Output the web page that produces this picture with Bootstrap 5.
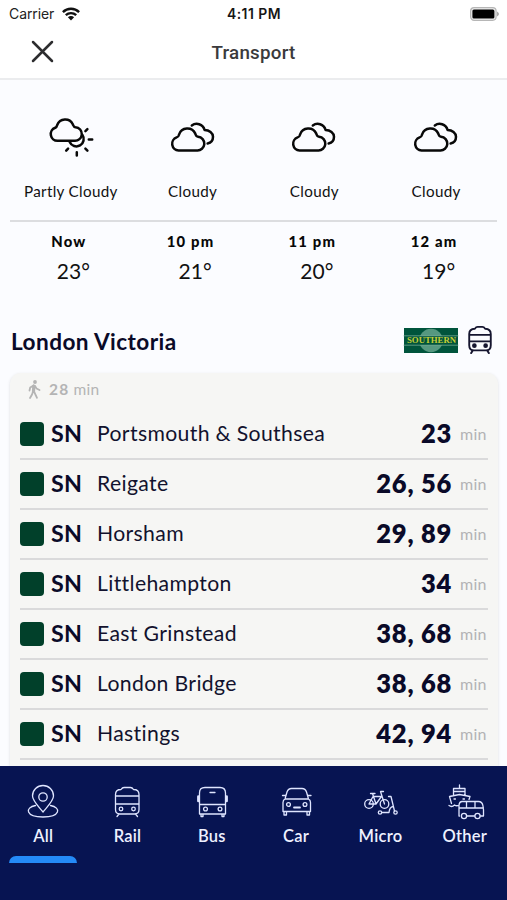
<!DOCTYPE html>
<html lang="en">
<head>
<meta charset="utf-8">
<meta name="viewport" content="width=device-width, initial-scale=1">
<title>Transport</title>
<link href="https://cdn.jsdelivr.net/npm/bootstrap@5.3.0/dist/css/bootstrap.min.css" rel="stylesheet">
<style>
body{font-family:Lato,sans-serif;background:#fbfcff;color:#0a0a28;height:900px;overflow:hidden;line-height:1}
svg{display:block;fill:none;stroke-linecap:round;stroke-linejoin:round;overflow:visible}
.grid3{display:grid;grid-template-columns:1fr auto 1fr}
.status{height:28px;padding:0 8px 0 9px;font-family:Inter,sans-serif;font-size:14px;color:#222}
.clock{font-weight:600;font-size:13.9px;color:#161616;letter-spacing:.5px;padding-top:1px}
.titlebar{height:52px;border-bottom:2px solid #ebecee;padding:0 31px 3px}
.titlebar h1{font:500 18.8px Roboto,sans-serif;color:#3a3a3c;letter-spacing:.25px;margin:3px 0 0}
.weather{margin:0 10px;color:#111}
.sky{height:142px;padding-top:34px;border-bottom:2px solid #dcdde0}
.sky svg{stroke:#080808;stroke-width:2.5}
.sky p{font-size:15.2px;letter-spacing:.33px;margin:24px 0 0}
.hour{font-weight:900;font-size:14.8px;line-height:14px;letter-spacing:1.2px;margin:12px 4px 0 0;color:#080808}
.deg{font-size:21px;margin:12px 0 0 5px;color:#111}
.station{height:60px;margin:31px 14px 0 11px}
.station h2{font-size:22.6px;font-weight:700;letter-spacing:.42px;margin:0}
.board{margin:1px 9px 0 10px;height:394px;padding:0 10px 0 10px;background:#f6f6f4;border-radius:11px 11px 0 0;box-shadow:0 1px 3px rgba(60,60,70,.16)}
.walk{height:37px;padding:0 0 4px 7px;font-size:15.5px;color:#b4b4b4;letter-spacing:.3px}
.walk b{font-size:15.5px;letter-spacing:1.2px}
.dep{height:50px;border-bottom:2px solid #dadadb}
.swatch{width:24px;height:24px;border-radius:4px;background:#01402a}
.code{width:45px;margin-left:7px;font-size:23.3px;font-weight:700;letter-spacing:.3px}
.dest{font-size:21.2px;letter-spacing:.35px;margin-left:1px;color:#12122e}
.due{font-size:25.5px;font-weight:800;letter-spacing:.75px}
.unit{font-size:16px;letter-spacing:.3px;color:#b2b2b4;width:28px;margin-left:8px}
.tabs{height:134px;background:#071452;color:#eef1ff;padding-left:1px}
.tabs .tab{width:84.4px;padding-top:17px}
.tabs svg{stroke:#dfe5ff;stroke-width:1.3}
.tab span{font-size:16.5px;font-weight:600;letter-spacing:.25px;margin-top:9px}
.bar{width:68px;height:7px;background:#248af7;border-radius:7px 7px 0 0;margin-top:11px}
</style>
<script src="https://cdn.jsdelivr.net/npm/bootstrap@5.3.0/dist/js/bootstrap.bundle.min.js"></script>
</head>
<body class="d-flex flex-column">
<svg width="0" height="0" class="position-absolute">
  <symbol id="cloudy" viewBox="0 0 46 32" overflow="visible">
    <path d="M8.600 28.400H27A6.800 6.800 0 0 0 28 14.800C26.100 14.700 26.200 14.100 25.300 11.600A8.800 8.800 0 0 0 9 12.600C8.500 14.700 8.500 14.800 6.600 15.400A6.700 6.700 0 0 0 8.600 28.400Z"/>
    <path d="M21.800 3.500C26 .3 33 1.800 34.600 8C39.200 8 43 10.800 43 14.800C43 18.300 41 20.800 37.600 21.500"/>
  </symbol>
</svg>

<header class="bg-white">
  <div class="status grid3 align-items-center">
    <div class="d-flex align-items-center gap-2"><span style="letter-spacing:-.1px">Carrier</span>
      <svg width="18" height="14" viewBox="0 0 18 14" stroke="#111" stroke-width="2.4" style="stroke-linecap:butt"><path d="M.9 5.1C5.4 .7 12.6 .7 17.1 5.1M3.8 8.2C6.8 5.4 11.2 5.4 14.2 8.2"/><path fill="#111" stroke="none" d="M5.9 10.2C7.7 8.6 10.3 8.6 12.1 10.2L9 13.5Z"/></svg>
    </div>
    <div class="clock">4:11 PM</div>
    <svg class="ms-auto" width="30" height="14" viewBox="0 0 30 14"><rect x="1.6" y=".7" width="25.500" height="12.6" rx="3.5" fill="#eee" stroke="#b6b6b6" stroke-width="1.2"/><rect x="3.400" y="2.5" width="22" height="9" rx="1.5" fill="#000"/><path d="M28 4.5Q32 7 28 9.5Z" fill="#aaa"/></svg>
  </div>
  <div class="titlebar grid3 align-items-center">
    <svg width="23" height="23" viewBox="0 0 23 23" stroke="#2d2d2f" stroke-width="2.5"><path d="M2 2 21 21M21 2 2 21"/></svg>
    <h1>Transport</h1><span></span>
  </div>
</header>

<section class="weather text-center">
  <div class="sky row g-0">
    <div class="col-3"><svg class="mx-auto" width="46" height="46" viewBox="0 0 46 46"><path d="M9.5 26.8H26.500A6.8 6.8 0 0 0 27.500 13.2C25.600 13 25.700 12.4 24.800 10.2A8.500 8.500 0 0 0 9.2 11C8.7 13 8.7 13.1 7.2 13.8A6.7 6.7 0 0 0 9.5 26.8Z"/><path d="M21.700 28A7.300 7.300 0 1 0 34.300 20.800M37.400 17.2 39.400 15.2M40.800 25.5H44.200M37.400 34.600 39.400 36.600M28.800 38.2V41.400M20.100 34.600 18.200 36.600"/></svg><p>Partly Cloudy</p></div>
    <div class="col-3"><svg class="mx-auto mt-2" width="46" height="38" viewBox="0 0 46 38"><use href="#cloudy" width="46" height="32"/></svg><p>Cloudy</p></div>
    <div class="col-3"><svg class="mx-auto mt-2" width="46" height="38" viewBox="0 0 46 38"><use href="#cloudy" width="46" height="32"/></svg><p>Cloudy</p></div>
    <div class="col-3"><svg class="mx-auto mt-2" width="46" height="38" viewBox="0 0 46 38"><use href="#cloudy" width="46" height="32"/></svg><p>Cloudy</p></div>
  </div>
  <div class="row g-0">
    <div class="col-3"><div class="hour">Now</div><div class="deg">23°</div></div>
    <div class="col-3"><div class="hour">10 pm</div><div class="deg">21°</div></div>
    <div class="col-3"><div class="hour">11 pm</div><div class="deg">20°</div></div>
    <div class="col-3"><div class="hour">12 am</div><div class="deg">19°</div></div>
  </div>
</section>

<div class="station d-flex align-items-center">
  <h2 class="me-auto">London Victoria</h2>
  <svg style="margin-bottom:2px" width="54" height="25" viewBox="0 0 54 25"><path fill="#00543c" d="M0 0H54V25H0Z"/><circle cx="27" cy="12.5" r="11.8" fill="#569880"/><path fill="#00543c" d="M1 8H53V17H1Z"/><path stroke="#71a893" stroke-width=".8" d="M0 7.8H54M0 17.2H54"/><text x="3" y="15.2" textLength="49" lengthAdjust="spacingAndGlyphs" font-family="Liberation Serif,serif" font-weight="700" font-size="7.8" fill="#c6cf35">SOUTHERN</text></svg>
  <svg class="mb-1" style="margin-left:9px" width="26" height="30" viewBox="0 0 27 32" stroke="#15152f" stroke-width="2"><path d="M8 4C9 2.5 10 2 11 2H16C17 2 18 2.500 19 4C22.500 4.200 25 6.200 25 9.500V21.500Q25 27 20 27H7Q2 27 2 21.500V9.500C2 6.200 4.500 4.200 8 4ZM2 10.500H25M2 17.500H25M6 27 4 30M21 27 23 30"/><circle cx="7.500" cy="22" r="1.500" fill="#15152f"/><circle cx="19.500" cy="22" r="1.500" fill="#15152f"/></svg>
</div>

<main class="board">
  <div class="walk d-flex align-items-center"><svg class="me-2" width="14" height="19" viewBox="0 0 14 19" stroke="#b4b4b4" stroke-width="1.800"><circle cx="8" cy="2" r="1.900" fill="#b4b4b4" stroke="none"/><path d="M6.500 5.500 7 11.500 10 17.800M6 11.500 5 14.500 3 18M6.500 5.500 3.200 7.500 2.500 10.500M8 6 9.500 8.500 12.500 10"/><path d="M6.800 6 6.500 11.500" stroke-width="3.200"/></svg><b class="me-1">28</b>min</div>
  <div class="dep d-flex align-items-center"><i class="swatch"></i><span class="code">SN</span><span class="dest me-auto">Portsmouth &amp; Southsea</span><span class="due">23</span><span class="unit">min</span></div>
  <div class="dep d-flex align-items-center"><i class="swatch"></i><span class="code">SN</span><span class="dest me-auto">Reigate</span><span class="due">26, 56</span><span class="unit">min</span></div>
  <div class="dep d-flex align-items-center"><i class="swatch"></i><span class="code">SN</span><span class="dest me-auto">Horsham</span><span class="due">29, 89</span><span class="unit">min</span></div>
  <div class="dep d-flex align-items-center"><i class="swatch"></i><span class="code">SN</span><span class="dest me-auto">Littlehampton</span><span class="due">34</span><span class="unit">min</span></div>
  <div class="dep d-flex align-items-center"><i class="swatch"></i><span class="code">SN</span><span class="dest me-auto">East Grinstead</span><span class="due">38, 68</span><span class="unit">min</span></div>
  <div class="dep d-flex align-items-center"><i class="swatch"></i><span class="code">SN</span><span class="dest me-auto">London Bridge</span><span class="due">38, 68</span><span class="unit">min</span></div>
  <div class="dep d-flex align-items-center"><i class="swatch"></i><span class="code">SN</span><span class="dest me-auto">Hastings</span><span class="due">42, 94</span><span class="unit">min</span></div>
</main>

<nav class="tabs d-flex mt-auto flex-shrink-0">
  <div class="tab d-flex flex-column align-items-center"><svg width="36" height="36" viewBox="0 0 36 36"><path d="M18 29C15 25 7.500 18 7.500 13A10.500 10.500 0 0 1 28.500 13C28.500 18 21 25 18 29Z"/><circle cx="18" cy="14" r="4.200"/><path d="M10.500 22.500C-.5 24.500 .5 33.800 18 34C35.500 33.800 36.500 24.500 25.500 22.500"/></svg><span>All</span><div class="bar"></div></div>
  <div class="tab d-flex flex-column align-items-center"><svg width="36" height="36" viewBox="0 0 36 36"><path d="M12 6.500C13 5 13.500 4.500 15 4.500H21.500C23 4.500 23.500 5 24.500 6.500C28 6.500 30 8.500 30 11.500V26.500Q30 31 25.500 31H11Q6.500 31 6.500 26.500V11.500C6.500 8.500 8.500 6.500 12 6.500ZM6.500 13H30M6.500 21H30M10 31 8 33.500M26.500 31 28.500 33.500"/><circle cx="12" cy="26" r="1.800"/><circle cx="24.500" cy="26" r="1.800"/></svg><span>Rail</span></div>
  <div class="tab d-flex flex-column align-items-center"><svg width="36" height="36" viewBox="0 0 36 36"><path d="M5.500 31V10Q5.500 4.500 11 4.500H26Q31.500 4.500 31.500 10V31ZM5.500 21.500H31.500M16 9.500H21M7 31V33.500H9V31M28 31V33.500H30V31"/><path d="M4.300 13.500V18M32.700 13.500V18" stroke-width="2.400"/><circle cx="11.500" cy="26" r="1.900"/><circle cx="26" cy="26" r="1.900"/></svg><span>Bus</span></div>
  <div class="tab d-flex flex-column align-items-center"><svg width="36" height="36" viewBox="0 0 36 36"><path d="M5 28.500V19.500Q5 17 7 16L9 9C10 6 11 5.500 13.500 5.500H24C26.500 5.500 27.500 6 28.500 9L30.500 16Q32.500 17 32.500 19.500V28.500ZM7.500 16H30M4.500 12.500H7.500M30 12.500H33M6 29V32H8.500V29M29 29V32H31.500V29"/><path d="M16 24.500H22" stroke-width="1.800"/><circle cx="10.500" cy="21.500" r="1.900"/><circle cx="27" cy="21.500" r="1.900"/></svg><span>Car</span></div>
  <div class="tab d-flex flex-column align-items-center"><svg width="36" height="36" viewBox="0 0 36 36"><circle cx="7" cy="21" r="4.300"/><circle cx="22.500" cy="21" r="4.300"/><path d="M7 21 11 13.500H19.500L14 21H7M14 21 10.500 10.500M8.500 10.500H13M22.500 21 18.500 8.500H21.500M26.500 13.500H29L32.500 28M20 29.500H27Q27.500 24 31 23.500"/><circle cx="18" cy="29.500" r="1.700"/><circle cx="33.500" cy="29.500" r="1.700"/></svg><span>Micro</span></div>
  <div class="tab d-flex flex-column align-items-center"><svg width="36" height="36" viewBox="0 0 36 36"><path d="M12.500 5.500V2M6.500 12V5.500H18V12M6.500 8.500H18M4.500 20.500 2.500 13.500 12.500 11.500 23 13.500 22 16.500M2 22.500C4 24 6 23.500 7.500 22C9 23 10 23 11.500 22.500M7 16H8.500M16 16H17.500M12.500 33H12V22Q12.500 18.500 15 18.500H31.500C34.500 18.500 35.500 20 36 23L36.500 27V33H33.500M20 33H27.500M12.500 25H36.500M19.500 19V25M28 19V25"/><circle cx="17" cy="33" r="2.600"/><circle cx="30.500" cy="33" r="2.600"/></svg><span>Other</span></div>
</nav>
</body>
</html>
